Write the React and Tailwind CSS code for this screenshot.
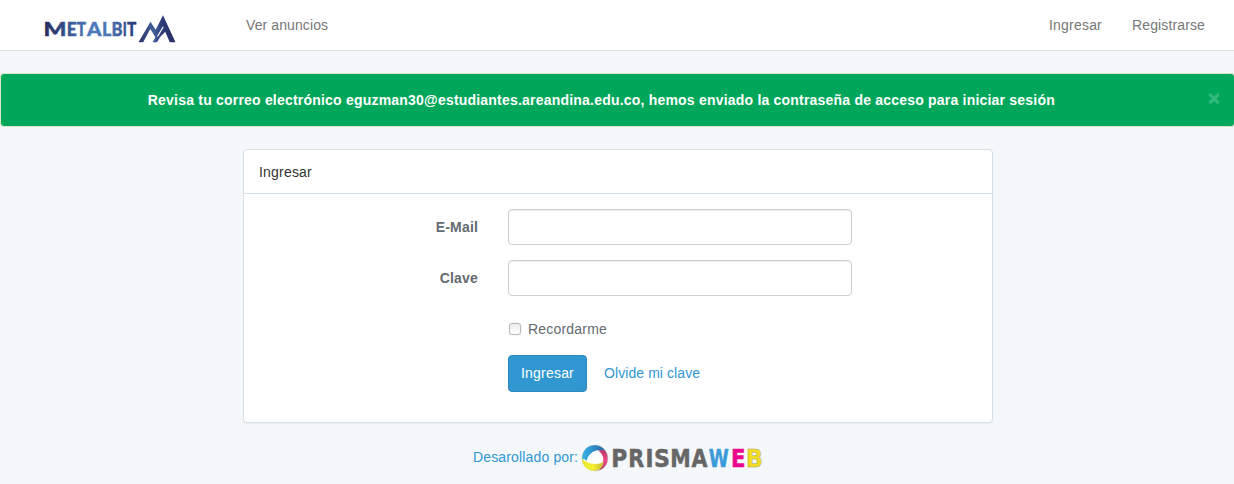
import React from "react";

const metalLetters = [
  ["M", 43.5, 23],
  ["E", 66.7, 10],
  ["T", 76.7, 9.3],
  ["A", 87, 14.5],
  ["L", 102, 9.3],
  ["B", 111.5, 11],
  ["I", 122.7, 4],
  ["T", 126.9, 9.3],
];

function MetalbitLogo() {
  return (
    <svg className="ml-[43px] h-[50px] w-[135px] shrink-0" viewBox="43 0 135 50" role="img" aria-label="Metalbit">
      <defs>
        <linearGradient id="word" gradientUnits="userSpaceOnUse" x1="44" y1="0" x2="136" y2="0">
          <stop offset="0" stopColor="#252c60" />
          <stop offset=".5" stopColor="#4d7abd" />
          <stop offset=".72" stopColor="#4c75b5" />
          <stop offset="1" stopColor="#29376f" />
        </linearGradient>
        <linearGradient id="peak" gradientUnits="userSpaceOnUse" x1="139" y1="0" x2="175" y2="0">
          <stop offset="0" stopColor="#293264" />
          <stop offset=".4" stopColor="#435f9d" />
          <stop offset=".65" stopColor="#2c3a77" />
          <stop offset="1" stopColor="#292f65" />
        </linearGradient>
      </defs>
      {metalLetters.map(([letter, x, width]) => (
        <text
          key={x}
          x={x}
          y="35.7"
          fill="url(#word)"
          stroke="url(#word)"
          strokeWidth=".4"
          fontFamily="Lato, 'Liberation Sans', sans-serif"
          fontWeight="900"
          fontSize="19"
          textLength={width}
          lengthAdjust="spacingAndGlyphs"
        >
          {letter}
        </text>
      ))}
      <path d="M138.5 42.3 L150.5 21.8 L155.7 29.8 L163 15.3 L175.5 42.3 H169.8 L162.7 26 L156.2 38.5 L150.3 29 L143.2 42.3 Z" fill="url(#peak)" />
      <path d="M152.5 42.3 L163.5 23.5 L167 30 L160.5 36.5 L157 42.3 Z" fill="url(#peak)" />
      <path d="M157.5 36.5 L163.3 26.8" stroke="#fff" strokeWidth="1.2" />
    </svg>
  );
}

const prismaLetters = [
  ["P", 611.3, 16, "#666"],
  ["R", 628.3, 16, "#666"],
  ["I", 645.5, 8, "#666"],
  ["S", 654, 16, "#666"],
  ["M", 670.3, 20.5, "#666"],
  ["A", 691.5, 16, "#666"],
  ["W", 708.7, 20, "#3b9bd9"],
  ["E", 731, 14.5, "#e9058c"],
  ["B", 746, 17, "#f1dc22"],
];

function PrismaLogo() {
  return (
    <svg className="h-[30px] w-[183px]" viewBox="581 443 183 30" role="img" aria-label="Prismaweb">
      <defs>
        <linearGradient id="blue" x1="0" y1="0" x2="1" y2="0">
          <stop offset="0" stopColor="#39b4e8" />
          <stop offset="1" stopColor="#2164a4" />
        </linearGradient>
        <linearGradient id="pink" x1="0" y1="0" x2="0" y2="1">
          <stop offset="0" stopColor="#b63769" />
          <stop offset=".55" stopColor="#f04b88" />
          <stop offset="1" stopColor="#a83c68" />
        </linearGradient>
        <linearGradient id="yellow" x1="0" y1="0" x2="1" y2="0">
          <stop offset="0" stopColor="#e5e62d" />
          <stop offset=".5" stopColor="#f6ef31" />
          <stop offset="1" stopColor="#c3b637" />
        </linearGradient>
      </defs>
      <circle cx="595" cy="458" r="12.8" fill="#fff" stroke="#8f8f8f" strokeWidth=".6" />
      <path d="M582.4 460 C581.5 450 588 445.3 595 445.3 Q602 445.5 605.5 451.5 Q599 448.5 593 451.8 Q588 455 586.5 461 Q584 457.5 582.4 460Z" fill="url(#blue)" />
      <path d="M598 450.5 Q603 449 605.5 451.3 C609.5 458 607.5 467 600.5 469.8 Q598 470 597 466.5 Q603 465.5 603.3 459.5 Q603 453.5 598 450.5Z" fill="url(#pink)" />
      <path d="M582.3 458.5 Q586 463 593 463.8 Q599 464.3 604 462 Q602 470.7 594 470.8 C586.5 470.5 582 465.5 582.3 458.5Z" fill="url(#yellow)" />
      {prismaLetters.map(([letter, x, width, color]) => (
        <text
          key={letter}
          x={x}
          y="467.3"
          fill={color}
          stroke={letter === "B" ? "#aaa56d" : color}
          strokeWidth=".5"
          fontFamily="'DejaVu Sans', sans-serif"
          fontWeight="700"
          fontSize="25"
          textLength={width}
          lengthAdjust="spacingAndGlyphs"
        >
          {letter}
        </text>
      ))}
    </svg>
  );
}

function Field({ id, label, type }) {
  return (
    <div className="mb-[15px] flex h-9 items-center">
      <label htmlFor={id} className="w-[234px] text-right font-bold tracking-[0.17px]">{label}</label>
      <input
        id={id}
        type={type}
        className="ml-[30px] h-9 w-[344px] rounded border border-[#ccd0d2] bg-white px-3 shadow-[inset_0_1px_1px_rgba(0,0,0,0.075)] outline-none"
      />
    </div>
  );
}

export default function App() {
  return (
    <div className="h-[484px] overflow-hidden bg-[#f5f8fa] font-['Liberation_Sans',Arial,sans-serif] text-[14px] leading-[22px] text-[#636b6f]">
      <nav className="flex h-[51px] items-center border-b border-[#d3e0e9] bg-white text-[#777]">
        <MetalbitLogo />
        <a href="#" className="ml-[68px] tracking-[0.1px]">Ver anuncios</a>
        <div className="mr-[29px] ml-auto flex gap-[30px]">
          <a href="#" className="tracking-[0.2px]">Ingresar</a>
          <a href="#" className="tracking-[0.13px]">Registrarse</a>
        </div>
      </nav>

      <div className="mt-[22px] flex h-[54px] w-[1235px] items-center rounded border border-[#d6e9c6] bg-[#00a65a] pr-[14px] text-white">
        <strong className="flex-1 pl-[12px] text-center tracking-[0.206px]">
          Revisa tu correo electrónico eguzman30@estudiantes.areandina.edu.co, hemos enviado la contraseña de acceso para iniciar sesión
        </strong>
        <button className="-mt-[6px] ml-[18px] text-[21px] leading-none font-bold text-white opacity-20 [text-shadow:0_1px_0_#fff]" aria-label="Cerrar">×</button>
      </div>

      <main className="mt-[22px] ml-[243px] h-[274px] w-[750px] rounded border border-[#d3e0e9] bg-white shadow-[0_1px_1px_rgba(0,0,0,0.05)]">
        <div className="flex h-[44px] items-center border-b border-[#d3e0e9] px-[15px] tracking-[0.2px] text-[#333]">Ingresar</div>
        <form className="pt-[15px]">
          <Field id="email" label="E-Mail" type="email" />
          <Field id="clave" label="Clave" type="password" />
          <label className="mt-[22px] ml-[265px] flex h-[22px] items-center gap-[7px] tracking-[0.2px]">
            <input
              type="checkbox"
              className="size-3 appearance-none rounded-[3px] border border-[#b8b8b8] bg-gradient-to-b from-[#eee] to-white shadow-[0_0_1px_rgba(0,0,0,0.3)]"
            />
            Recordarme
          </label>
          <div className="mt-[15px] ml-[264px] flex items-start">
            <button type="button" className="h-[37px] w-[79px] rounded border border-[#2a88bd] bg-[#3097d1] pb-px tracking-[0.2px] text-white">Ingresar</button>
            <a href="#" className="mt-[7px] ml-[17px] tracking-[0.08px] text-[#3097d1]">Olvide mi clave</a>
          </div>
        </form>
      </main>

      <footer className="mt-[20px] ml-[473px] flex items-center text-[#3097d1]">
        <a href="#" className="flex items-center">
          <span className="mr-[3px] -mt-[2px] w-[105px] tracking-[0.15px] whitespace-nowrap">Desarollado por:</span>
          <PrismaLogo />
        </a>
      </footer>
    </div>
  );
}
